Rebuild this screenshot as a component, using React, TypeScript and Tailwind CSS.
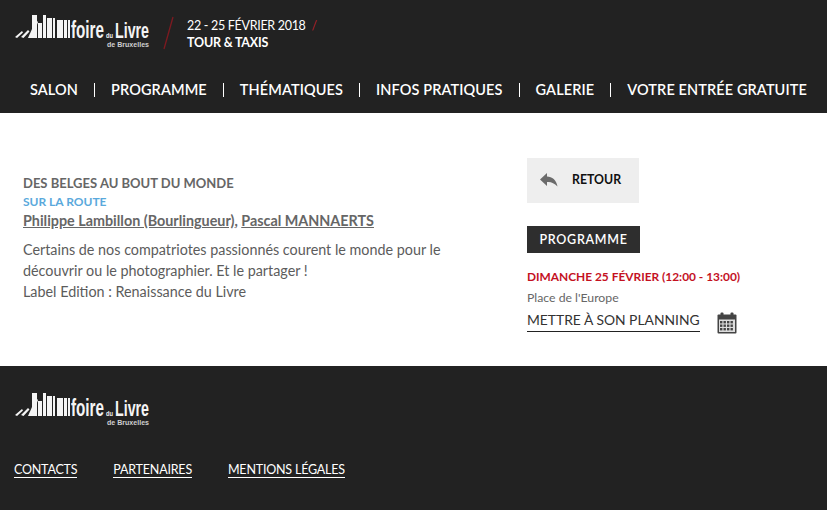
const font = "font-['Lato','Liberation_Sans',sans-serif]";

function Logo() {
  return (
    <svg width="142" height="44" viewBox="0 0 142 44" className="block" fill="#f4f4f4">
      {/* diagonal strokes */}
      <path d="M1 29 L8 23 L9 24.5 L3 30 Z M7 29 L14 22 L15.5 23.5 L9.5 30 Z" />
      <path d="M14 30 L22 12 L24 14 L18 30 Z" />
      {/* book shelf */}
      <rect x="18" y="7" width="5" height="23" />
      <rect x="24" y="15" width="4" height="15" />
      <rect x="29" y="7" width="3" height="23" />
      <rect x="33" y="10" width="5" height="20" />
      <rect x="39" y="10" width="2" height="20" />
      <rect x="43" y="12" width="6" height="18" />
      <rect x="50" y="12" width="3" height="18" />
      <rect x="54" y="12" width="2" height="18" />
      <text x="57" y="30" fontFamily="Liberation Sans, sans-serif" fontSize="23" fontWeight="700" textLength="33" lengthAdjust="spacingAndGlyphs">foire</text>
      <text x="92" y="30" fontFamily="Liberation Sans, sans-serif" fontSize="8" fontWeight="700" textLength="7" lengthAdjust="spacingAndGlyphs">du</text>
      <text x="101" y="30" fontFamily="Liberation Sans, sans-serif" fontSize="22" fontWeight="700" textLength="34" lengthAdjust="spacingAndGlyphs">Livre</text>
      <text x="93" y="39" fontFamily="Liberation Sans, sans-serif" fontSize="8" fontWeight="700" textLength="42" lengthAdjust="spacingAndGlyphs" fill="#cfcfcf">de Bruxelles</text>
    </svg>
  );
}

function CalendarIcon() {
  return (
    <svg width="20" height="22" viewBox="0 0 20 22" fill="#444" className="block">
      <rect x="0.5" y="2.5" width="19" height="19" rx="1" />
      <rect x="3.5" y="0.5" width="3" height="5" rx="1" />
      <rect x="13.5" y="0.5" width="3" height="5" rx="1" />
      <rect x="2" y="7.5" width="16" height="12.5" fill="#ddd" />
      {[3, 6.5, 10, 13.5].map((x) =>
        [9, 12.5, 16].map((y) => <rect key={`${x}-${y}`} x={x} y={y} width="2.4" height="2.4" fill="#444" />),
      )}
    </svg>
  );
}

const navItems = ["SALON", "PROGRAMME", "THÉMATIQUES", "INFOS PRATIQUES", "GALERIE", "VOTRE ENTRÉE GRATUITE"];

export default function App() {
  return (
    <div className={`${font} h-[510px] w-[827px] overflow-hidden bg-white`}>
      <header className="h-[113px] bg-[#222222] text-white">
        <div className="flex h-[82px] items-start pl-[14px] pt-[8px]">
          <Logo />
          <svg width="12" height="34" viewBox="0 0 12 34" className="ml-[6px] mt-[8px]">
            <path d="M11 1 L2 33" stroke="#7d1a20" strokeWidth="1.3" />
          </svg>
          <div className="ml-[13px] mt-[9px] text-[12.5px] leading-[17px]">
            <div className="tracking-[-0.3px]">
              22 - 25 FÉVRIER 2018 <span className="ml-[3px] text-[#b3202a]">/</span>
            </div>
            <div className="font-bold tracking-[-0.2px]">TOUR &amp; TAXIS</div>
          </div>
        </div>
        <nav className="flex items-center pl-[30px] text-[14.5px] font-semibold leading-[16px]">
          {navItems.map((item, i) => (
            <div key={item} className="flex items-center">
              {i > 0 && <span className="mx-4 h-[14px] w-px bg-white" />}
              <a className="whitespace-nowrap tracking-[0.1px]">{item}</a>
            </div>
          ))}
        </nav>
      </header>

      <main className="flex h-[253px] bg-white">
        <section className="w-[527px] shrink-0 pl-[23px] pt-[61px]">
          <h1 className="text-[13px] font-bold leading-[18px] text-[#666666]">DES BELGES AU BOUT DU MONDE</h1>
          <div className="text-[12px] font-bold leading-[19px] text-[#5aa9dc]">SUR LA ROUTE</div>
          <div className="text-[14.35px] font-bold leading-[19px] text-[#666666]">
            <a className="underline">Philippe Lambillon (Bourlingueur)</a>, <a className="underline">Pascal MANNAERTS</a>
          </div>
          <p className="mt-[9px] text-[14.35px] leading-[21px] text-[#5c5c5c]">
            Certains de nos compatriotes passionnés courent le monde pour le
            <br />
            découvrir ou le photographier. Et le partager !
            <br />
            Label Edition : Renaissance du Livre
          </p>
        </section>
        <aside className="pt-[45px]">
          <button className="flex h-[45px] w-[112px] items-center bg-[#eeeeee] pl-[13px] text-[12.3px] font-bold text-[#111111]">
            <svg width="18" height="15" viewBox="0 0 18 15" fill="#6b6b6b">
              <path d="M7 0 L0 6.5 L7 13 L7 9 C11 8.5 14 10 17.5 13.5 C16.5 7 12 3.5 7 3.5 Z" />
            </svg>
            <span className="ml-[14px]">RETOUR</span>
          </button>
          <div className="mt-[23px] flex h-[27px] w-[113px] items-center justify-center bg-[#2e2e2e] pt-[2px] text-[12.5px] font-semibold tracking-[0.7px] text-white">
            PROGRAMME
          </div>
          <div className="mt-[16px] text-[11.9px] font-bold leading-[16px] text-[#c4111f]">DIMANCHE 25 FÉVRIER (12:00 - 13:00)</div>
          <div className="mt-[5px] text-[12.25px] leading-[16px] text-[#666666]">Place de l'Europe</div>
          <div className="mt-[5px] flex items-start">
            <a className="border-b border-[#222222] pb-[2px] text-[13.85px] leading-[18px] text-[#333333]">METTRE À SON PLANNING</a>
            <span className="ml-[17px] mt-[1px]">
              <CalendarIcon />
            </span>
          </div>
        </aside>
      </main>

      <footer className="h-[144px] bg-[#222222] pl-[14px] pt-[20px] text-white">
        <Logo />
        <div className="mt-[32px] flex gap-9 text-[12.5px] leading-[15px] tracking-[-0.2px]">
          <a className="border-b border-white">CONTACTS</a>
          <a className="border-b border-white">PARTENAIRES</a>
          <a className="border-b border-white">MENTIONS LÉGALES</a>
        </div>
      </footer>
    </div>
  );
}
